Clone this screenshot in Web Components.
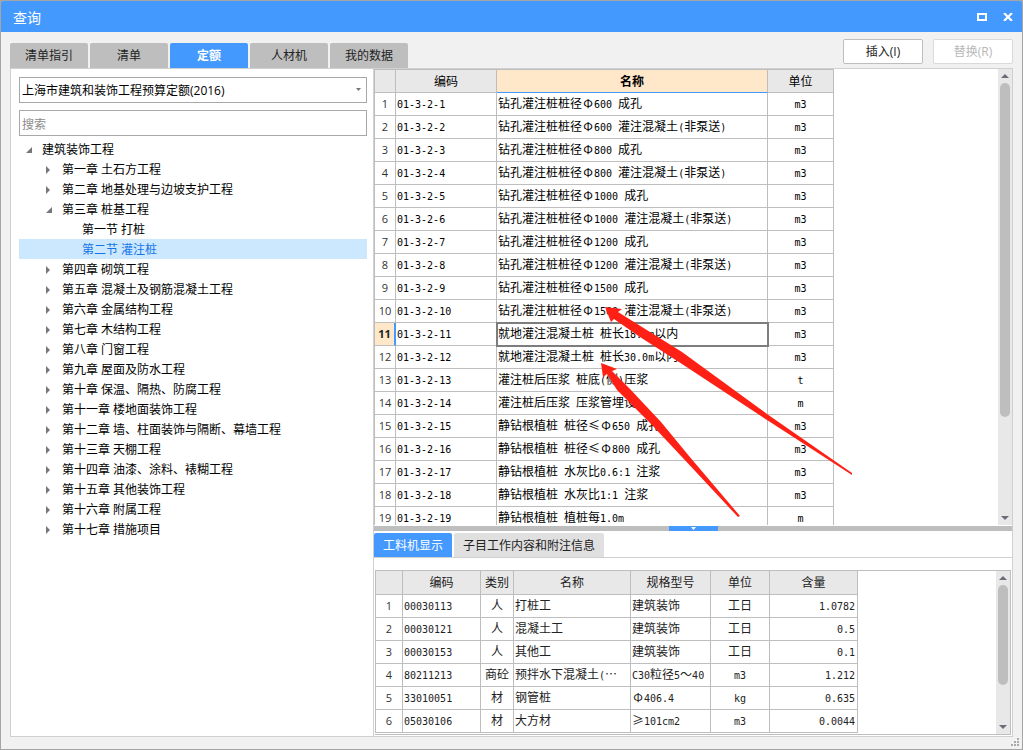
<!DOCTYPE html>
<html lang="zh-CN">
<head>
<meta charset="utf-8">
<title>查询</title>
<style>
html, body { margin: 0; height: 100%; }
body { font: 12px/20px "Open Sans", "Noto Sans CJK SC", sans-serif; color: #111; background: #a5a5a5; }
</style>
</head>
<body>
<query-window></query-window>
<script>
const define = (name, html, setup) => {
  const tpl = document.createElement('template');
  tpl.innerHTML = html;
  customElements.define(name, class extends HTMLElement {
    connectedCallback() {
      if (this.shadowRoot) return;
      const root = this.attachShadow({ mode: 'open' });
      root.append(tpl.content.cloneNode(true));
      if (setup) setup(root, this);
    }
  });
};

// Grid cells use half-width Latin next to full-width Chinese and symbols.
const cellText = s => s.replace(/[\x20-\x7e]+|[Φ≤≥…～]/g, m =>
  /[Φ≤≥…～]/.test(m) ? `<i>${m}</i>` : `<span>${m}</span>`);

define('title-bar', `
<style>
:host { display: flex; align-items: center; height: 31px; padding: 0 8px 0 12px; background: #4499ff; color: #fff; border-radius: 3px 3px 0 0; }
h1 { flex: 1; margin: 0; font-size: 14px; font-weight: 400; line-height: 20px; padding-top: 2px; }
button { all: unset; display: flex; width: 12px; height: 12px; margin-left: 14px; align-items: center; justify-content: center; }
</style>
<h1><slot></slot></h1>
<button aria-label="最大化"><svg width="10" height="8"><path d="M1 1h8v6H1z" fill="none" stroke="#fff" stroke-width="2"/></svg></button>
<button aria-label="关闭"><svg width="10" height="8" viewBox="0 0 10 8"><path d="M1 0l8 8M9 0L1 8" stroke="#fff" stroke-width="2.2"/></svg></button>`);

define('main-tab', `
<style>
:host { display: block; width: 78px; }
button { all: unset; box-sizing: border-box; width: 100%; height: 25px; line-height: 24px; text-align: center; background: #bebebe; color: #222; border-radius: 2px 2px 0 0; }
:host([selected]) button { background: #4499ff; color: #fff; font-weight: 700; }
</style>
<button role="tab"><slot></slot></button>`);

define('push-button', `
<style>
:host { display: block; width: 80px; }
button { box-sizing: border-box; width: 100%; height: 25px; padding: 0; font: inherit; line-height: 23px; color: #222; background: #fff; border: 1px solid #bebebe; border-radius: 2px; }
button:disabled { color: #b8b8b8; border-color: #dadada; }
</style>
<button><slot></slot></button>`,
(root, el) => { root.querySelector('button').disabled = el.hasAttribute('disabled'); });

define('scroll-bar', `
<style>
:host { display: flex; flex-direction: column; align-items: center; width: 14px; box-sizing: border-box; background: #e8e8e8; }
svg { flex: none; width: 8px; height: 4px; margin: 5px 0; fill: #6d6d78; }
.thumb { flex: var(--thumb, 77) 1 0; width: 10px; border-radius: 5px; background: #bebebe; }
.rest { flex: var(--rest, 23) 1 0; }
</style>
<svg viewBox="0 0 8 4"><path d="M0 4L4 0l4 4z"/></svg>
<div class="thumb"></div><div class="rest"></div>
<svg viewBox="0 0 8 4"><path d="M0 0l4 4 4-4z"/></svg>`);

define('chapter-item', `
<style>
:host { display: flex; align-items: center; box-sizing: border-box; height: 20px; padding: 2px 0 0 7px; color: #000; }
:host([level="1"]) { padding-left: 27px; }
:host([level="2"]) { padding-left: 47px; }
:host([selected]) { background: #cce8ff; color: #1675e8; }
.mark { display: flex; width: 16px; flex: none; }
svg { fill: #777; }
</style>
<span class="mark"></span><slot></slot>`,
(root, el) => {
  const state = el.getAttribute('state');
  root.querySelector('.mark').innerHTML =
    state === 'open' ? '<svg width="6" height="6"><path d="M0 6h6V0z"/></svg>' :
    state === 'closed' ? '<svg width="6" height="8"><path d="M0 0v8l4-4z"/></svg>' : '';
});

define('chapter-panel', `
<style>
:host { display: flex; flex-direction: column; width: 348px; flex: none; padding: 8px 6px 0 8px; background: #fff; }
.pick { position: relative; display: flex; margin-bottom: 7px; }
select, input { box-sizing: border-box; width: 100%; height: 26px; margin: 0; padding: 2px 2px 0; font: inherit; color: #000; background: #fff; border: 1px solid #a8a8a8; border-radius: 0; appearance: none; outline: 0; }
.pick svg { position: absolute; right: 6px; top: 11px; fill: #777; }
input::placeholder { color: #8c8c8c; opacity: 1; }
[role=tree] { margin-top: 3px; }
</style>
<div class="pick"><select aria-label="定额库"><option>上海市建筑和装饰工程预算定额(2016)</option></select><svg width="5" height="3"><path d="M0 0h5L2.5 3z"/></svg></div>
<input type="text" placeholder="搜索" aria-label="搜索">
<div role="tree"></div>`,
root => {
  const items = [
    [0, 'open', '建筑装饰工程'], [1, 'closed', '第一章 土石方工程'], [1, 'closed', '第二章 地基处理与边坡支护工程'],
    [1, 'open', '第三章 桩基工程'], [2, '', '第一节 打桩'], [2, '', '第二节 灌注桩', 'selected'],
    ...['第四章 砌筑工程', '第五章 混凝土及钢筋混凝土工程', '第六章 金属结构工程', '第七章 木结构工程', '第八章 门窗工程',
      '第九章 屋面及防水工程', '第十章 保温、隔热、防腐工程', '第十一章 楼地面装饰工程', '第十二章 墙、柱面装饰与隔断、幕墙工程',
      '第十三章 天棚工程', '第十四章 油漆、涂料、裱糊工程', '第十五章 其他装饰工程', '第十六章 附属工程', '第十七章 措施项目'].map(t => [1, 'closed', t])
  ];
  root.querySelector('[role=tree]').innerHTML = items.map(([l, s, t, sel]) =>
    `<chapter-item role="treeitem" level="${l}" state="${s}" ${sel || ''}>${t}</chapter-item>`).join('');
});

const gridStyle = `
table { table-layout: fixed; border-collapse: separate; border-spacing: 0; border-left: 1px solid #bebebe; border-top: 1px solid #bebebe; }
th, td { box-sizing: border-box; height: 23px; padding: 0 1px 2px; overflow: hidden; white-space: nowrap; line-height: 18px; font-family: "Noto Sans CJK SC", sans-serif; font-weight: 400; text-align: left; border-right: 1px solid #bebebe; border-bottom: 1px solid #bebebe; }
thead th { background: #e8e8e8; text-align: center; padding-bottom: 0; }
tbody th { text-align: center; color: #333; padding: 0; font-family: "Open Sans", sans-serif; font-size: 11px; }
td span { font: 10px/14px "DejaVu Sans Mono", monospace; white-space: pre; }
td i { display: inline-block; width: 12px; height: 18px; vertical-align: top; font-style: normal; text-align: center; }
.c { text-align: center; }
.r { text-align: right; padding-right: 2px; }`;

define('quota-grid', `
<style>
:host { display: flex; flex: 1 1 0; min-height: 0; overflow: hidden; background: #fff; color: #000; }
.view { flex: 1; min-width: 0; overflow: hidden; }
${gridStyle}
table { width: 460px; }
thead th { height: 23px; }
thead th.on { background: #ffe7c9; font-weight: 700; border-bottom-color: #4499ff; }
tbody tr.cur th { background: #ffe7c9; color: #222; font-weight: 700; border-right: 2px solid #4499ff; }
tr.cur td.name { outline: 2px solid #7d7d7d; outline-offset: -1px; }
scroll-bar { --thumb: 78; --rest: 22; }
</style>
<div class="view"><table>
<colgroup><col style="width:21px"><col style="width:101px"><col style="width:271px"><col style="width:66px"></colgroup>
<thead><tr><th></th><th>编码</th><th class="on">名称</th><th>单位</th></tr></thead><tbody></tbody></table></div>
<scroll-bar></scroll-bar>`,
root => {
  const rows = ['钻孔灌注桩桩径Φ600 成孔', '钻孔灌注桩桩径Φ600 灌注混凝土(非泵送)', '钻孔灌注桩桩径Φ800 成孔', '钻孔灌注桩桩径Φ800 灌注混凝土(非泵送)',
    '钻孔灌注桩桩径Φ1000 成孔', '钻孔灌注桩桩径Φ1000 灌注混凝土(非泵送)', '钻孔灌注桩桩径Φ1200 成孔', '钻孔灌注桩桩径Φ1200 灌注混凝土(非泵送)',
    '钻孔灌注桩桩径Φ1500 成孔', '钻孔灌注桩桩径Φ1500 灌注混凝土(非泵送)', '就地灌注混凝土桩 桩长18.0m以内', '就地灌注混凝土桩 桩长30.0m以内',
    '灌注桩后压浆 桩底(侧)压浆', '灌注桩后压浆 压浆管埋设', '静钻根植桩 桩径≤Φ650 成孔', '静钻根植桩 桩径≤Φ800 成孔',
    '静钻根植桩 水灰比0.6:1 注浆', '静钻根植桩 水灰比1:1 注浆', '静钻根植桩 植桩每1.0m'];
  const units = { 13: 't', 14: 'm', 19: 'm' };
  root.querySelector('tbody').innerHTML = rows.map((t, i) => {
    const n = i + 1;
    return `<tr${n === 11 ? ' class="cur"' : ''}><th scope="row">${n}</th><td>${cellText('01-3-2-' + n)}</td><td class="name">${cellText(t)}</td><td class="c">${cellText(units[n] || 'm3')}</td></tr>`;
  }).join('');
});

define('split-handle', `
<style>
:host { display: flex; justify-content: center; height: 5px; flex: none; background: #bebebe; margin-top: 1px; }
button { all: unset; width: 49px; height: 5px; background: #4499ff; display: flex; justify-content: center; align-items: center; }
</style>
<button aria-label="收起"><svg width="5" height="3"><path d="M0 0h5L2.5 3z" fill="#fff"/></svg></button>`);

define('detail-tab', `
<style>
:host { display: block; }
button { all: unset; box-sizing: border-box; height: 24px; padding: 0 9px; line-height: 25px; background: #e0e0e0; color: #222; border-radius: 2px 2px 0 0; }
:host([selected]) button { background: #4499ff; color: #fff; }
</style>
<button role="tab"><slot></slot></button>`);

define('resource-grid', `
<style>
:host { display: flex; flex: none; background: #fff; color: #222; border: 1px solid #bebebe; border-left: 0; margin: 12px 1px 1px; }
.view { flex: 1; min-width: 0; overflow: hidden; padding-bottom: 1px; }
${gridStyle}
table { width: 483px; border-top: 0; }
thead th { height: 24px; padding-bottom: 2px; }
scroll-bar { --thumb: 74; --rest: 26; }
</style>
<div class="view"><table>
<colgroup><col style="width:27px"><col style="width:78px"><col style="width:33px"><col style="width:117px"><col style="width:80px"><col style="width:59px"><col style="width:88px"></colgroup>
<thead><tr><th></th><th>编码</th><th>类别</th><th>名称</th><th>规格型号</th><th>单位</th><th>含量</th></tr></thead><tbody></tbody></table></div>
<scroll-bar></scroll-bar>`,
root => {
  const rows = [['00030113', '人', '打桩工', '建筑装饰', '工日', '1.0782'], ['00030121', '人', '混凝土工', '建筑装饰', '工日', '0.5'],
    ['00030153', '人', '其他工', '建筑装饰', '工日', '0.1'], ['80211213', '商砼', '预拌水下混凝土(…', 'C30粒径5～40', 'm3', '1.212'],
    ['33010051', '材', '钢管桩', 'Φ406.4', 'kg', '0.635'], ['05030106', '材', '大方材', '≥101cm2', 'm3', '0.0044']];
  const cls = ['', 'c', '', '', 'c', 'r'];
  root.querySelector('tbody').innerHTML = rows.map((r, i) =>
    `<tr><th scope="row">${i + 1}</th>${r.map((t, j) => `<td class="${cls[j]}">${cellText(t)}</td>`).join('')}</tr>`).join('');
});

define('pointer-arrows', `
<style>
:host { position: absolute; left: 0; top: 0; pointer-events: none; }
svg { display: block; }
</style>
<svg width="860" height="520" fill="#ff2015">
<path d="M605 307L622 309 618 312 682 352 767 414 852 473 852 475 767 420 682 364 640 337 614 319 611 322z"/>
<path d="M601 363L617 369 612 371 630 389 661 422 689 456 740 516 738 517 682 457 651 424 617 390 607 374 603 377z"/>
</svg>`);

define('query-window', `
<style>
:host { position: relative; display: flex; flex-direction: column; box-sizing: border-box; height: 100vh; min-height: 600px; padding: 1px; background: #a5a5a5; overflow: hidden; }
main { flex: 1; min-height: 0; display: flex; flex-direction: column; padding: 7px 9px 12px; background: #f1f1f1; }
.top { display: flex; align-items: flex-end; gap: 2px; height: 29px; }
.acts { margin-left: auto; align-self: flex-start; display: flex; gap: 10px; }
.body { flex: 1; min-height: 0; display: flex; border: 1px solid #d0d0d0; background: #fff; }
.right { flex: 1; min-width: 0; display: flex; flex-direction: column; border-left: 1px solid #d0d0d0; }
.tabs { display: flex; gap: 2px; padding-top: 2px; border-bottom: 1px solid #d0d0d0; }
.grip { position: absolute; right: 4px; bottom: 4px; }
</style>
<title-bar>查询</title-bar>
<main>
  <div class="top">
    <main-tab>清单指引</main-tab><main-tab>清单</main-tab><main-tab selected>定额</main-tab><main-tab>人材机</main-tab><main-tab>我的数据</main-tab>
    <div class="acts"><push-button>插入(I)</push-button><push-button disabled>替换(R)</push-button></div>
  </div>
  <div class="body">
    <chapter-panel></chapter-panel>
    <div class="right">
      <quota-grid></quota-grid>
      <split-handle></split-handle>
      <div class="tabs" role="tablist"><detail-tab selected>工料机显示</detail-tab><detail-tab>子目工作内容和附注信息</detail-tab></div>
      <resource-grid></resource-grid>
    </div>
  </div>
</main>
<svg class="grip" width="8" height="8" fill="#aaa"><path d="M6 0h2v2H6zM3 3h2v2H3zM6 3h2v2H6zM0 6h2v2H0zM3 6h2v2H3zM6 6h2v2H6z"/></svg>
<pointer-arrows></pointer-arrows>`);
</script>
</body>
</html>
